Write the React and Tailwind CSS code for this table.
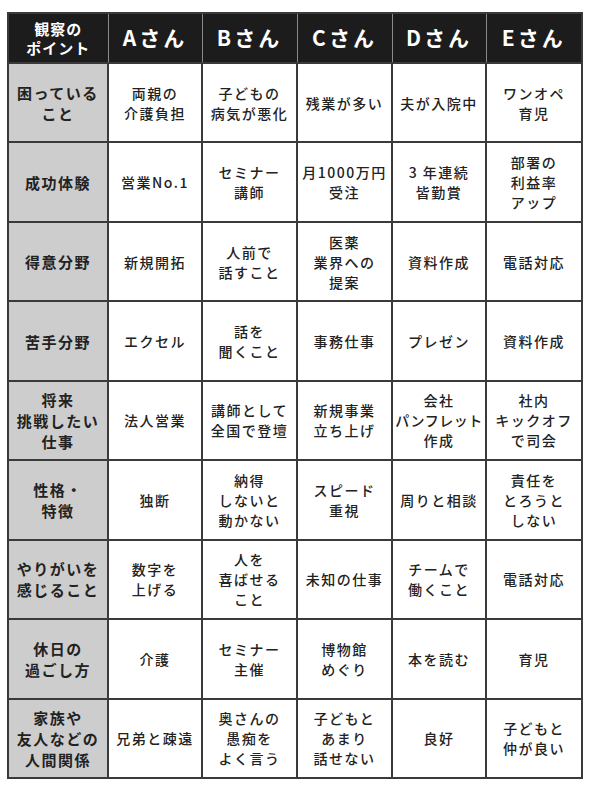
const heads = ['Aさん', 'Bさん', 'Cさん', 'Dさん', 'Eさん'];

const rows = [
  ['困っている\nこと', '両親の\n介護負担', '子どもの\n病気が悪化', '残業が多い', '夫が入院中', 'ワンオペ\n育児'],
  ['成功体験', '営業No.1', 'セミナー\n講師', '月1000万円\n受注', '3 年連続\n皆勤賞', '部署の\n利益率\nアップ'],
  ['得意分野', '新規開拓', '人前で\n話すこと', '医薬\n業界への\n提案', '資料作成', '電話対応'],
  ['苦手分野', 'エクセル', '話を\n聞くこと', '事務仕事', 'プレゼン', '資料作成'],
  ['将来\n挑戦したい\n仕事', '法人営業', '講師として\n全国で登壇', '新規事業\n立ち上げ', '会社\nパンフレット\n作成', '社内\nキックオフ\nで司会'],
  ['性格・\n特徴', '独断', '納得\nしないと\n動かない', 'スピード\n重視', '周りと相談', '責任を\nとろうと\nしない'],
  ['やりがいを\n感じること', '数字を\n上げる', '人を\n喜ばせる\nこと', '未知の仕事', 'チームで\n働くこと', '電話対応'],
  ['休日の\n過ごし方', '介護', 'セミナー\n主催', '博物館\nめぐり', '本を読む', '育児'],
  ['家族や\n友人などの\n人間関係', '兄弟と疎遠', '奥さんの\n愚痴を\nよく言う', '子どもと\nあまり\n話せない', '良好', '子どもと\n仲が良い'],
];

function Lines({ text }) {
  return text.split('\n').map((l, i) => (
    <div key={i} className={l.length >= 6 && !/\d/.test(l) ? 'whitespace-nowrap tracking-[0.5px]' : 'whitespace-nowrap'}>
      {l}
    </div>
  ));
}

export default function App() {
  return (
    <div
      className="min-h-[790px] w-[592px] bg-white pl-[7px] pt-[12px]"
      style={{ fontFamily: '"Noto Sans CJK JP", "Noto Sans", sans-serif' }}
    >
      <table className="w-[574px] table-fixed border-collapse border-2 border-[#3a3a3a] text-center">
        <colgroup>
          <col className="w-[100px]" />
          <col className="w-[94px]" />
          <col className="w-[95px]" />
          <col className="w-[95px]" />
          <col className="w-[94px]" />
          <col className="w-[96px]" />
        </colgroup>
        <thead>
          <tr className="h-[50px] bg-[#1c1c1c] text-white">
            <th className="border-x border-[#8a8a8a] p-0 text-[15px] font-bold leading-[19px] tracking-[1px]">
              <div>観察の</div>
              <div>ポイント</div>
            </th>
            {heads.map((h) => (
              <th key={h} className="border-x border-[#8a8a8a] p-0 text-[21px] font-bold tracking-[3px]">
                {h}
              </th>
            ))}
          </tr>
        </thead>
        <tbody>
          {rows.map(([label, ...cells], r) => (
            <tr key={r} className="h-[79.45px]">
              <td className="border-2 border-[#3a3a3a] bg-[#cdcdcd] p-0 text-[15px] font-bold leading-[21px] tracking-[1.5px] text-[#222]">
                <Lines text={label} />
              </td>
              {cells.map((c, i) => (
                <td
                  key={i}
                  className="border-2 border-[#3a3a3a] p-0 text-[14px] font-medium leading-[20px] tracking-[1.5px] text-[#222]"
                >
                  <Lines text={c} />
                </td>
              ))}
            </tr>
          ))}
        </tbody>
      </table>
    </div>
  );
}
